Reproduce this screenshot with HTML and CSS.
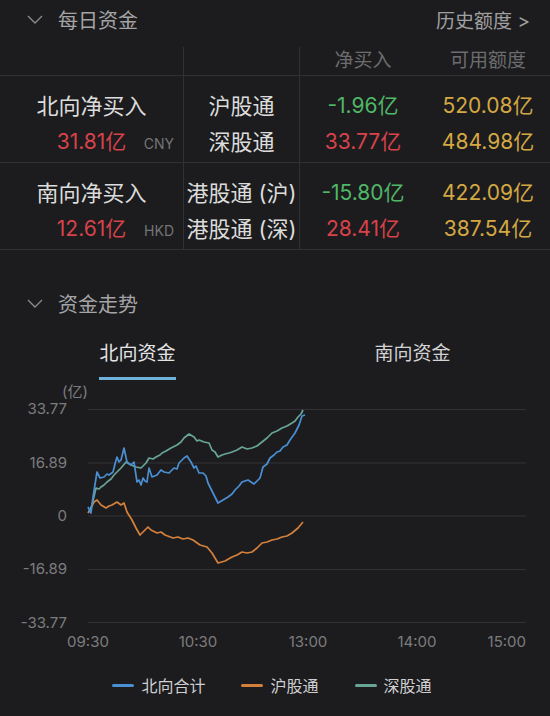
FILE: index.html
```html
<!DOCTYPE html>
<html lang="zh-CN">
<head>
  <meta charset="UTF-8">
  <meta name="viewport" content="width=device-width, initial-scale=1.0">
  <title>每日资金</title>
  <link rel="stylesheet" href="styles.css">
</head>
<body>

<div class="section-head">
  <svg class="chevron" width="16" height="9" viewBox="0 0 16 9"><polyline points="1,1 8,8 15,1" /></svg>
  <span class="section-title">每日资金</span>
  <a class="history-link">历史额度 &gt;</a>
</div>

<div class="flow-table">
  <div class="row head-row">
    <div class="cell col-name"></div>
    <div class="cell col-channel"></div>
    <div class="cell">净买入</div>
    <div class="cell">可用额度</div>
  </div>

  <div class="row group">
    <div class="cell col-name">
      <div class="line">北向净买入</div>
      <div class="line total"><span></span><span class="red">31.81亿</span><span class="unit">CNY</span></div>
    </div>
    <div class="cell col-channel">
      <div class="line">沪股通</div>
      <div class="line">深股通</div>
    </div>
    <div class="cell">
      <div class="line green">-1.96亿</div>
      <div class="line red">33.77亿</div>
    </div>
    <div class="cell">
      <div class="line gold">520.08亿</div>
      <div class="line gold">484.98亿</div>
    </div>
  </div>

  <div class="row group">
    <div class="cell col-name">
      <div class="line">南向净买入</div>
      <div class="line total"><span></span><span class="red">12.61亿</span><span class="unit">HKD</span></div>
    </div>
    <div class="cell col-channel">
      <div class="line">港股通 (沪)</div>
      <div class="line">港股通 (深)</div>
    </div>
    <div class="cell">
      <div class="line green">-15.80亿</div>
      <div class="line red">28.41亿</div>
    </div>
    <div class="cell">
      <div class="line gold">422.09亿</div>
      <div class="line gold">387.54亿</div>
    </div>
  </div>
</div>

<div class="section-head trend-head">
  <svg class="chevron" width="16" height="9" viewBox="0 0 16 9"><polyline points="1,1 8,8 15,1" /></svg>
  <span class="section-title">资金走势</span>
</div>

<div class="tabs">
  <div class="tab active"><span>北向资金</span></div>
  <div class="tab"><span>南向资金</span></div>
</div>

<svg class="chart" width="550" height="280" viewBox="0 380 550 280">
  <line class="grid" x1="88" y1="409.5" x2="526" y2="409.5" />
  <line class="grid" x1="88" y1="463" x2="526" y2="463" />
  <line class="grid" x1="88" y1="516" x2="526" y2="516" />
  <line class="grid" x1="88" y1="569.5" x2="526" y2="569.5" />
  <line class="grid" x1="88" y1="622.5" x2="526" y2="622.5" />

  <text class="axis" x="62" y="397">(亿)</text>
  <text class="axis" x="67" y="414" text-anchor="end">33.77</text>
  <text class="axis" x="67" y="468" text-anchor="end">16.89</text>
  <text class="axis" x="67" y="521" text-anchor="end">0</text>
  <text class="axis" x="67" y="574" text-anchor="end">-16.89</text>
  <text class="axis" x="67" y="628" text-anchor="end">-33.77</text>

  <text class="axis" x="88" y="647" text-anchor="middle">09:30</text>
  <text class="axis" x="198" y="647" text-anchor="middle">10:30</text>
  <text class="axis" x="308" y="647" text-anchor="middle">13:00</text>
  <text class="axis" x="417" y="647" text-anchor="middle">14:00</text>
  <text class="axis" x="526" y="647" text-anchor="end">15:00</text>

  <!-- 沪股通 -->
  <polyline class="series sh" points="88,513 91,508 94,502 97,500 101,505 106,508 109,506 112,505 117,502 121,505 124,503 127,512 132,520 136,528 140,535 144,531 148,527 151,530 157,533 161,532 165,535 173,538 178,537 183,539 188,538 193,540 200,545 207,547 212,553 218,563 225,561 232,557 237,555 242,552 247,553 252,552 257,548 262,543 267,542 272,540 277,539 282,537 287,536 292,533 298,528 303,522" />
  <!-- 深股通 -->
  <polyline class="series sz" points="89,512 92,505 96,488 99,489 101,487 104,485 107,482 111,479 114,475 118,471 121,468 126,462 131,465 136,467 141,468 146,463 149,458 153,459 156,457 160,455 162,453 166,451 171,448 177,445 181,442 184,438 189,434 194,437 197,441 199,440 204,442 209,443 212,450 215,452 218,457 222,455 225,454 229,453 232,452 237,450 242,447 247,449 252,448 257,446 262,442 267,438 272,433 277,431 282,428 287,426 292,423 295,421 298,417 301,414 303,410" />
  <!-- 北向合计 -->
  <polyline class="series north" points="88,507 91,513 93,497 97,472 100,478 104,477 107,474 109,475 113,472 115,464 117,457 119,462 121,460 124,448 127,462 131,465 134,462 137,482 139,480 141,485 143,478 145,481 147,482 149,468 152,477 157,475 161,470 164,472 169,473 174,468 177,469 179,463 184,458 187,456 191,462 194,468 196,466 199,473 203,473 206,476 208,483 213,493 218,503 223,500 228,497 232,494 235,490 239,486 242,482 248,480 251,482 254,484 257,481 260,478 263,467 267,464 270,458 274,455 277,452 280,451 283,447 287,445 290,440 295,433 299,425 302,416 305,415" />
</svg>

<div class="legend">
  <div class="legend-item"><span class="swatch north"></span>北向合计</div>
  <div class="legend-item"><span class="swatch sh"></span>沪股通</div>
  <div class="legend-item"><span class="swatch sz"></span>深股通</div>
</div>

</body>
</html>
```

FILE: styles.css
```css
/* Dark theme, phone sized */
body {
  font-family: Inter, "Noto Sans CJK SC", sans-serif;
  background-color: #1c1c1e;
  color: #dcdcdc;
  margin: 0;
  padding: 0;
  width: 550px;
}

/* Section headings */
.section-head {
  display: flex;
  align-items: center;
  height: 38px;
  padding: 0 20px 0 27px;
}

.chevron {
  display: block;
  fill: none;
  stroke: #8a8a8c;
  stroke-width: 1.4;
}

.section-title {
  margin-left: 15px;
  font-size: 20px;
  color: #a4a4a6;
}

.history-link {
  margin-left: auto;
  font-size: 19px;
  color: #a0a0a2;
}

.trend-head {
  margin-top: 34px;
}

/* Daily flow table */
.flow-table {
  margin-top: 9px;
}

.row {
  display: grid;
  grid-template-columns: 184px 116px 126px 1fr;
  border-bottom: 1px solid #313133;
}

.cell {
  box-sizing: border-box;
  text-align: center;
}

.col-name,
.col-channel {
  border-right: 1px solid #313133;
}

.head-row .cell {
  height: 28px;
  line-height: 28px;
  font-size: 19px;
  color: #6c6c6e;
}

.group .cell {
  padding: 12px 0 2px;
}

.line {
  height: 36px;
  line-height: 36px;
  font-size: 22px;
  white-space: nowrap;
}

.total {
  display: grid;
  grid-template-columns: 1fr auto 1fr;
  align-items: baseline;
  font-size: 21px;
}

.unit {
  justify-self: end;
  padding-right: 9px;
  font-size: 14px;
  color: #747476;
}

.green { color: #4fb867; font-size: 21px; }
.red { color: #d8424a; font-size: 21px; }
.gold { color: #d4a843; font-size: 21px; }

/* Tabs */
.tabs {
  display: flex;
}

.tab {
  flex: 1;
  text-align: center;
  padding-top: 19px;
}

.tab span {
  display: inline-block;
  line-height: 26px;
  font-size: 19px;
  color: #d2d2d4;
  padding-bottom: 10px;
  border-bottom: 3px solid transparent;
}

.tab.active span {
  color: #e4e4e6;
  border-bottom-color: #6fb2da;
}

/* Chart */
.chart {
  display: block;
}

.grid {
  stroke: #323234;
  stroke-width: 1;
}

.axis {
  font-family: Inter, "Noto Sans CJK SC", sans-serif;
  font-size: 15px;
  fill: #7c7c7e;
}

.series {
  fill: none;
  stroke-width: 1.7;
  stroke-linejoin: round;
}

.series.north { stroke: #4a8fd3; }
.series.sh { stroke: #d4803c; }
.series.sz { stroke: #68a596; }

/* Legend */
.legend {
  display: flex;
  justify-content: center;
  align-items: center;
  gap: 36px;
  height: 50px;
  padding-right: 6px;
}

.legend-item {
  display: flex;
  align-items: center;
  gap: 7px;
  font-size: 16px;
  color: #cfcfd1;
}

.swatch {
  width: 22px;
  height: 3px;
  border-radius: 2px;
}

.swatch.north { background-color: #4a8fd3; }
.swatch.sh { background-color: #d4803c; }
.swatch.sz { background-color: #68a596; }
```
